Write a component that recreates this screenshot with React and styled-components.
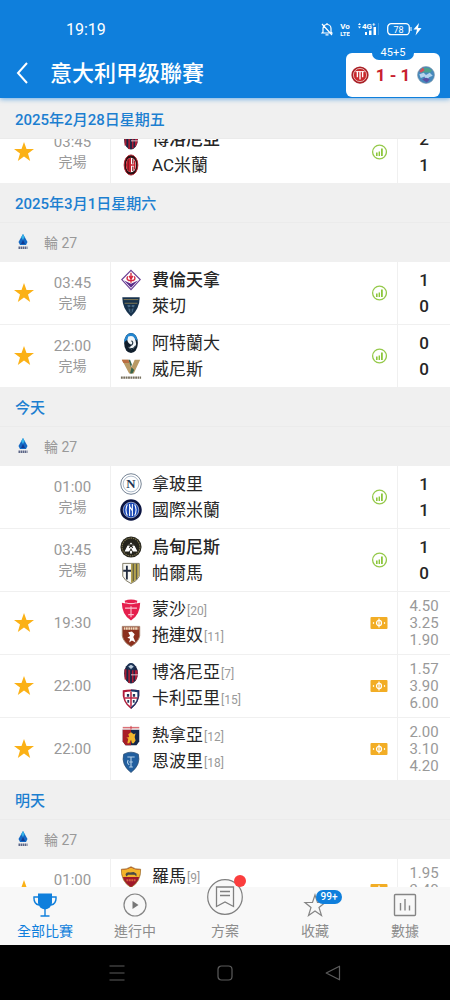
import React from 'react';
import styled, { createGlobalStyle } from 'styled-components';

const BLUE = '#0f7fdc';
const INK = '#262626';
const MUTED = '#999';

const GlobalStyle = createGlobalStyle`
  *, *::before, *::after { box-sizing: border-box; }
  body {
    margin: 0;
    background: #000;
    font-family: Roboto, "Noto Sans CJK TC", sans-serif;
    color: ${INK};
  }
  button {
    margin: 0;
    padding: 0;
    border: 0;
    background: none;
    font: inherit;
    color: inherit;
    cursor: pointer;
  }
  ul { list-style: none; margin: 0; padding: 0; }
  h1, h2 { margin: 0; }
  svg { display: block; flex: none; }
`;

const Screen = styled.div`
  display: flex;
  flex-direction: column;
  height: 100vh;
  background: #fff;
`;

const Header = styled.header`
  position: relative;
  z-index: 2;
  flex: none;
  background: ${BLUE};
  color: #fff;
  box-shadow: 0 1px 5px rgba(15, 127, 220, 0.6);
`;

const StatusBar = styled.div`
  display: flex;
  align-items: center;
  justify-content: space-between;
  height: 48px;
  padding: 10px 28px 0 66px;
  font-size: 16px;
`;

const StatusIcons = styled.div`
  display: flex;
  align-items: center;
  gap: 7px;
`;

const TitleBar = styled.div`
  display: flex;
  align-items: center;
  height: 50px;
  padding: 0 10px 0 12px;
`;

const BackButton = styled.button`
  width: 20px;
  height: 32px;
  display: flex;
  align-items: center;
  justify-content: center;
`;

const Title = styled.h1`
  flex: 1;
  padding: 2px 0 0 18px;
  font-size: 22px;
  line-height: 32px;
  font-weight: 500;
  white-space: nowrap;
`;

const LiveCard = styled.button`
  position: relative;
  display: flex;
  align-items: center;
  justify-content: space-between;
  width: 94px;
  height: 44px;
  margin-top: 4px;
  padding: 0 5px;
  border-radius: 6px;
  background: #fff;
`;

const LiveMinute = styled.span`
  position: absolute;
  top: -7px;
  left: 50%;
  transform: translateX(-50%);
  width: 42px;
  height: 14px;
  border-radius: 7px;
  background: ${BLUE};
  color: #fff;
  font-size: 11px;
  line-height: 14px;
  text-align: center;
`;

const LiveScore = styled.strong`
  color: #c8202f;
  font-size: 17px;
  font-weight: 700;
`;

const MatchList = styled.main`
  flex: 1;
  min-height: 0;
  overflow: hidden;
`;

const DayHeading = styled.h2`
  height: ${(p) => (p.$pinned ? 41 : 40)}px;
  padding: 2px 15px 0;
  border-bottom: 1px solid #ebebeb;
  background: #f0f0f0;
  color: #1c7fd0;
  font-size: 15px;
  line-height: ${(p) => (p.$pinned ? 40 : 38)}px;
  font-weight: 500;
`;

const RoundHeading = styled.div`
  display: flex;
  align-items: center;
  gap: 13px;
  height: 38px;
  padding: 0 15px;
  background: #f0f0f0;
  color: ${MUTED};
  font-size: 14px;
`;

const ScrolledRows = styled.ul`
  display: flex;
  flex-direction: column;
  justify-content: flex-end;
  height: 44px;
  overflow: hidden;
`;

const Row = styled.li`
  display: grid;
  grid-template-columns: 48px 49px 13px 1fr 36px 53px;
  flex: none;
  height: 63px;
  border-top: 1px solid #f0f0f0;
  background: #fff;
`;

const StarCell = styled.div`
  display: flex;
  align-items: center;
  justify-content: center;
`;

const TimeCell = styled.div`
  grid-column: 2;
  display: flex;
  flex-direction: column;
  align-items: center;
  justify-content: center;
  color: ${MUTED};
  font-size: 15px;
  line-height: 20px;
`;

const MatchState = styled.span`
  min-height: 20px;
  font-size: 14px;
`;

const TeamsCell = styled.div`
  grid-column: 4;
  display: flex;
  flex-direction: column;
  justify-content: center;
  padding-left: 9px;
  border-left: 1px solid #f0f0f0;
`;

const Team = styled.div`
  display: flex;
  align-items: center;
  gap: 10px;
  height: 26px;
  font-size: 17px;
  line-height: 26px;
  font-weight: ${(p) => (p.$winner ? 500 : 400)};
  white-space: nowrap;
`;

const Rank = styled.span`
  padding-left: 1px;
  color: ${MUTED};
  font-size: 12px;
`;

const MarkCell = styled.div`
  display: flex;
  align-items: center;
  justify-content: center;
`;

const ScoreCell = styled.div`
  display: flex;
  flex-direction: column;
  align-items: center;
  justify-content: center;
  border-left: 1px solid #f0f0f0;
  font-size: 17px;
  line-height: 26px;
  font-weight: 500;
`;

const OddsCell = styled(ScoreCell)`
  color: ${MUTED};
  font-size: 15px;
  line-height: 17px;
  font-weight: 400;
`;

const TabBar = styled.nav`
  position: relative;
  z-index: 2;
  flex: none;
  display: flex;
  height: 58px;
  background: #f8f8f8;
`;

const Tab = styled.button`
  flex: 1;
  display: flex;
  flex-direction: column;
  align-items: center;
  justify-content: flex-end;
  gap: ${(p) => (p.$raised ? 5 : 3)}px;
  padding-bottom: 3px;
  color: ${(p) => (p.$active ? BLUE : '#8c8c8c')};
  font-size: 14px;
  line-height: 22px;
`;

const TabIcon = styled.span`
  position: relative;
  display: block;
`;

const CountBadge = styled.span`
  position: absolute;
  top: -3px;
  left: 13px;
  width: 26px;
  height: 14px;
  border-radius: 7px;
  background: ${BLUE};
  color: #fff;
  font-size: 10px;
  line-height: 14px;
  font-weight: 500;
  text-align: center;
`;

const DotBadge = styled.span`
  position: absolute;
  top: -4px;
  right: -3px;
  width: 12px;
  height: 12px;
  border-radius: 50%;
  background: #fb3d3d;
`;

const SystemNav = styled.div`
  flex: none;
  display: flex;
  justify-content: center;
  height: 55px;
  background: #000;
  color: #5c5c5c;
`;

const SystemButton = styled.button`
  width: 24%;
  display: flex;
  align-items: center;
  justify-content: center;
`;

const SHIELD = 'M3 2.5 Q12 0.5 21 2.5 Q22.5 15 12 23 Q1.500 15 3 2.500Z';

const crests = {
  bologna: (
    <g>
      <ellipse cx="12" cy="12.500" rx="7.500" ry="11" fill="#1b2746" />
      <path d="M6 8v11M10 8v15" stroke="#a51d33" strokeWidth="2" />
      <path d="M13 9h6q1 6-1.500 10.500L13 23z" fill="#b01c38" />
      <path d="M15.500 9v12" stroke="#1b2746" strokeWidth="1.600" />
      <path d="M12 14h8" stroke="#e6d3d9" strokeWidth="1" />
      <circle cx="12" cy="5" r="4" fill="#1d3557" />
      <path d="M9 5l3-2 3 2-3 2.500z" fill="#b9c9db" />
    </g>
  ),
  milan: (
    <g>
      <ellipse cx="12" cy="12" rx="7.500" ry="11" fill="#2a1013" stroke="#b3202d" strokeWidth="1" />
      <ellipse cx="12" cy="12" rx="5.500" ry="8" fill="#fff" />
      <path d="M12 4a5.500 8 0 0 0 0 16z" fill="#c9202f" />
      <path d="M9 6v12M14 5v5.500M14 13.500v5" stroke="#861720" strokeWidth="1.400" />
      <path d="M12 12h5M16 7v10" stroke="#c9202f" strokeWidth="1.500" />
    </g>
  ),
  fiorentina: (
    <g>
      <path d="M12 1.500L22 11.500 12 22.500 2 11.500z" fill="#fff" stroke="#6a3e93" strokeWidth="1.300" />
      <path d="M4.500 12.500L12 16l7.500-3.500L12 20.500z" fill="#5b2d8a" />
      <path d="M12 4v11M8.500 8q-2 3 1 4.500M15.500 8q2 3-1 4.500M9 12.500h6M10 7.500L12 11l2-3.500" fill="none" stroke="#d62941" strokeWidth="1.500" />
    </g>
  ),
  lecce: (
    <g>
      <path d="M2.500 2.500H21.500Q21.500 15 12 23.500 2.500 15 2.500 2.500z" fill="#17324d" />
      <path d="M4 5h16M5 9h14" stroke="#8a7f56" strokeWidth="1" />
      <path d="M8 11h8l-2 7-2 2-2-2z" fill="#456783" />
      <path d="M12 11v8M9 14h6" stroke="#10253b" strokeWidth="1.200" />
    </g>
  ),
  atalanta: (
    <g>
      <ellipse cx="12" cy="12" rx="7.500" ry="11" fill="#101e2c" />
      <path d="M12 1a7.500 11 0 0 0-7.500 11q2-4 6-3.500 5-1.500 8.800 1A7.500 11 0 0 0 12 1z" fill="#2385cf" />
      <path d="M9 5q5-2 7 2 3 6 0 10-4 4-7-1 3 1 4-2-4-1-5-5z" fill="#f3f6f8" />
      <path d="M12.500 9.500q3 2 0 5M10 17q4 3 7-2" fill="none" stroke="#1d3140" strokeWidth="1.200" />
    </g>
  ),
  venezia: (
    <g>
      <path d="M2 2h7l3.500 8L16 2h6l-7 15h-5z" fill="#b99a65" />
      <path d="M9 2h2l2 5-1 3zM12.500 10l3 3-2 4h-2.500z" fill="#37644c" />
      <path d="M2 2h7l1.500 3.500H3.700z" fill="#ba6e42" />
      <path d="M1 21.500h22" stroke="#77705f" strokeWidth="2.500" strokeDasharray="2 .6" />
    </g>
  ),
  napoli: (
    <g>
      <circle cx="12" cy="12" r="11.200" fill="#fff" stroke="#5a6b80" strokeWidth=".9" />
      <circle cx="12" cy="12" r="8.600" fill="#fff" stroke="#8fa2b6" strokeWidth=".8" />
      <text x="12" y="16.700" textAnchor="middle" fontFamily="Liberation Serif, serif" fontWeight="700" fontSize="14" fill="#1d3556">N</text>
    </g>
  ),
  inter: (
    <g>
      <circle cx="12" cy="12" r="11.700" fill="#0b1442" />
      <circle cx="12" cy="12" r="8.500" fill="#1745b4" stroke="#fff" strokeWidth=".6" />
      <path d="M8 6q-3 6 0 12M16 6q3 6 0 12M10.500 5.500v13M13.500 5.500v13M10.500 8l3 5" fill="none" stroke="#fff" strokeWidth="1.200" />
    </g>
  ),
  udinese: (
    <g>
      <circle cx="12" cy="12" r="11.500" fill="#25241c" />
      <circle cx="12" cy="12" r="9.700" fill="none" stroke="#7c744d" strokeWidth="1.200" strokeDasharray="1.500 1" />
      <path d="M5 17l3-6 4-4 4 4 3 6h-5l-2-4-2 4z" fill="#fff" />
      <path d="M9 10h6M10 8l4 5M14 8l-4 5" stroke="#25241c" strokeWidth="1.100" />
      <path d="M11 16h2v3h-2z" fill="#fff" />
    </g>
  ),
  parma: (
    <g>
      <path d="M3 1.500h18v14q-2 5-9 8-7-3-9-8z" fill="#f7f7f4" stroke="#77725c" strokeWidth="1" />
      <path d="M12 2h8.500v13q-2 5-8.500 8z" fill="#b3a14b" />
      <path d="M14.500 2v19M18 2v17" stroke="#5b5b49" strokeWidth="1.300" />
      <path d="M7.500 4v15M3.500 9.500H12" stroke="#202a3e" strokeWidth="2" />
    </g>
  ),
  monza: (
    <g>
      <path d="M5 2q7-3 14 0l-1 3 4-1q0 13-10 19.500Q2 17 2 4l4 1z" fill="#e51f4d" />
      <path d="M6 4q6 2 12 0M5.500 10h13M12 8v12M9 17h6" fill="none" stroke="#fbc3cf" strokeWidth="1.200" />
    </g>
  ),
  torino: (
    <g>
      <path d="M2.500 1.500h19V12Q20 19 12 23.500 4 19 2.500 12z" fill="#8b2f1d" stroke="#a5826c" strokeWidth="1" />
      <path d="M4 3.800h16" stroke="#f0ddbf" strokeWidth="2.600" strokeDasharray="2 .5" />
      <path d="M9 8l4-1 3 3-1.500 3 2.500 6-4-2-3 2 1-4-3-1 3-2z" fill="#fff" />
    </g>
  ),
  cagliari: (
    <g>
      <path d={SHIELD} fill="#ae1938" />
      <path d="M12 1.500q5 0 9 1 1.500 12.500-9 20.500z" fill="#1b3468" />
      <path d="M5 4.500q7-1.500 14 0 1 10.500-7 16-8-5.500-7-16z" fill="#fff" />
      <path d="M12 4v16M5 11h14" stroke="#bd2948" strokeWidth="1.700" />
      <path d="M7.500 6.500H10v3H7.500zM14 6.500h2.500v3H14zM8 13h2v3H8zM14 13h2v3h-2z" fill="#26365b" />
    </g>
  ),
  genoa: (
    <g>
      <path d="M3 5h18v13l-3 4H6l-3-4z" fill="#14284a" />
      <path d="M3 5h9v17H6l-3-4z" fill="#a81e27" />
      <path d="M3 1h18v4H3z" fill="#f6eeee" />
      <path d="M12 1v4M3 3h18" stroke="#cf3540" strokeWidth="1" />
      <path d="M9 10l3-2 3 2 2-1-1 4 1 4-2 3h-2l-1-4-2 4H8l1-5-2-1 3-1z" fill="#f0b62c" />
    </g>
  ),
  empoli: (
    <g>
      <path d="M4 3.500Q12-1 20 3.500 23 15 12 23.500 1 15 4 3.500z" fill="#225f9f" stroke="#2a4b70" strokeWidth=".8" />
      <path d="M8 6.500h8M12 6.500v11M9 10q-2 3 1 5M10 17.500h4M10 12h4" fill="none" stroke="#b4d0e8" strokeWidth="1.200" />
    </g>
  ),
  roma: (
    <g>
      <path d="M1.500 3.500Q7 4 12 .8 17 4 22.500 3.500 23 17 12 23.500 1 17 1.500 3.500z" fill="#a0192a" stroke="#a0802f" strokeWidth=".8" />
      <path d="M2 4Q7 4.500 12 1.500 17 4.500 22 4q.4 4-1 8H3Q1.500 8 2 4z" fill="#f3b42a" />
      <path d="M6 9q1-3 5-2l4-.500 3 2v3l-2-2H9l-2 2z" fill="#4a4a46" />
      <path d="M7 15.500h10" stroke="#d9603c" strokeWidth="2" strokeDasharray="2 .7" />
    </g>
  ),
  liveHome: (
    <g>
      <circle cx="12" cy="12" r="11.500" fill="#a92027" />
      <circle cx="12" cy="12" r="8.800" fill="#c9282c" stroke="#f1dcd6" strokeWidth="1" />
      <path d="M8.500 7v8M12 7v11M15.500 7v8" stroke="#fff" strokeWidth="1.800" />
      <path d="M6 7.500h12" stroke="#fff" strokeWidth="1.200" />
    </g>
  ),
  liveAway: (
    <g>
      <circle cx="12" cy="12" r="11.300" fill="#4689bd" stroke="#8197a8" strokeWidth=".8" />
      <path d="M4 5.500Q12-1 20 5.500l-2 3H6z" fill="#4ea08c" />
      <path d="M3 6.500l5-4.500 2 4-5 3z" fill="#d24e5c" />
      <path d="M3 11l6-2 3 3 5-3 4 4-5 2-3 5-3-6-5 2z" fill="#b4d3ed" />
      <path d="M7 18q5-5 10 0l-4 4z" fill="#5a4fa3" />
    </g>
  ),
};

const Crest = ({ name, size = 22 }) => (
  <svg width={size} height={size} viewBox="0 0 24 24" aria-hidden="true">
    {crests[name]}
  </svg>
);

const StarIcon = () => (
  <svg width="22" height="22" viewBox="0 0 22 22" aria-hidden="true">
    <path d="M11 1l2.500 7H21l-6 4.600 2.200 7.400L11 15.600 4.800 20 7 12.600 1 8h7.500z" fill="#fbb116" />
  </svg>
);

const StatsIcon = () => (
  <svg width="16" height="16" viewBox="0 0 16 16" aria-label="數據">
    <circle cx="8.500" cy="8" r="6.900" fill="none" stroke="#95c94a" strokeWidth="1.300" />
    <path d="M5 8.500h1.600V12H5zM7.600 7.500h1.400V12H7.600zM10 4.500h1.800V12H10z" fill="#8cc63c" />
  </svg>
);

const TicketIcon = () => (
  <svg width="18" height="12" viewBox="0 0 18 12" aria-label="賠率">
    <rect x=".5" width="17" height="12" rx="1" fill="#f2ad25" />
    <ellipse cx="9" cy="6" rx="2.500" ry="2.700" fill="none" stroke="#fff" strokeWidth="1.200" />
    <path d="M9 1.500v9" stroke="#fff" strokeWidth="1.200" />
    <path d="M3.500 5v2M14.500 5v2" stroke="#fff4d2" strokeWidth="1.200" />
  </svg>
);

const LeagueIcon = () => (
  <svg width="16" height="16" viewBox="0 0 16 16" aria-hidden="true">
    <path d="M8 0l2 3.500L12.500 8 11 11H5L3.500 8 6 3.500z" fill="#1469c4" />
    <path d="M8 0l1.600 3L8 6 6.200 3.200z" fill="#35b3e8" />
    <path d="M8 6l2 4H6z" fill="#123a91" />
    <path d="M3.500 13.800h9" stroke="#5c6687" strokeWidth="2.400" strokeDasharray="1.600 .5" />
  </svg>
);

const days = [
  {
    label: '2025年3月1日星期六',
    matches: [
      { star: true, time: '03:45', state: '完場', score: [1, 0], teams: [['fiorentina', '費倫天拿', null, true], ['lecce', '萊切']] },
      { star: true, time: '22:00', state: '完場', score: [0, 0], teams: [['atalanta', '阿特蘭大'], ['venezia', '威尼斯']] },
    ],
  },
  {
    label: '今天',
    matches: [
      { time: '01:00', state: '完場', score: [1, 1], teams: [['napoli', '拿玻里'], ['inter', '國際米蘭']] },
      { time: '03:45', state: '完場', score: [1, 0], teams: [['udinese', '烏甸尼斯', null, true], ['parma', '帕爾馬']] },
      { star: true, time: '19:30', odds: ['4.50', '3.25', '1.90'], teams: [['monza', '蒙沙', 20], ['torino', '拖連奴', 11]] },
      { star: true, time: '22:00', odds: ['1.57', '3.90', '6.00'], teams: [['bologna', '博洛尼亞', 7], ['cagliari', '卡利亞里', 15]] },
      { star: true, time: '22:00', odds: ['2.00', '3.10', '4.20'], teams: [['genoa', '熱拿亞', 12], ['empoli', '恩波里', 18]] },
    ],
  },
  {
    label: '明天',
    matches: [
      { star: true, time: '01:00', state: '', odds: ['1.95', '3.40', ''], teams: [['roma', '羅馬', 9]] },
    ],
  },
];

const scrolledMatch = {
  star: true,
  time: '03:45',
  state: '完場',
  score: [2, 1],
  teams: [['bologna', '博洛尼亞', null, true], ['milan', 'AC米蘭']],
};

const OddsValue = styled.span`
  min-height: 17px;
`;

const Match = ({ match }) => (
  <Row>
    <StarCell>
      {match.star && (
        <button type="button" aria-label="收藏">
          <StarIcon />
        </button>
      )}
    </StarCell>
    <TimeCell>
      <span>{match.time}</span>
      {match.state !== undefined && <MatchState>{match.state}</MatchState>}
    </TimeCell>
    <TeamsCell>
      {match.teams.map(([crest, name, rank, winner]) => (
        <Team key={name} $winner={winner}>
          <Crest name={crest} />
          <span>
            {name}
            {rank && <Rank>[{rank}]</Rank>}
          </span>
        </Team>
      ))}
      {match.teams.length === 1 && <Team />}
    </TeamsCell>
    <MarkCell>{match.odds ? <TicketIcon /> : <StatsIcon />}</MarkCell>
    {match.odds ? (
      <OddsCell>
        {match.odds.map((o) => <OddsValue key={o}>{o}</OddsValue>)}
      </OddsCell>
    ) : (
      <ScoreCell>
        {match.score.map((s, i) => <span key={i}>{s}</span>)}
      </ScoreCell>
    )}
  </Row>
);

const StatusGlyphs = () => (
  <StatusIcons>
    <svg width="12" height="14" viewBox="0 0 12 14" fill="none" stroke="#fff" strokeWidth="1.200" aria-hidden="true">
      <path d="M2 10V6.500a4 4 0 0 1 8 0V10l1 1H1zM4.500 12.800h3M6 1v1.500M1 2l10 11" />
    </svg>
    <svg width="10" height="14" viewBox="0 0 10 14" aria-hidden="true">
      <g fill="#fff" fontFamily="Roboto, sans-serif" fontWeight="700" textAnchor="middle">
        <text x="5" y="6.500" fontSize="8">Vo</text>
        <text x="5" y="13.500" fontSize="6">LTE</text>
      </g>
    </svg>
    <svg width="22" height="14" viewBox="0 0 22 14" fill="#fff" aria-hidden="true">
      <path d="M1 3l1.500-2L4 3zM1 4.500h3L2.500 6.500zM8 10h2v3H8zM12 8.500h2.500V13H12zM16.500 5H19v8h-2.500z" />
      <text x="5" y="6.500" fontFamily="Roboto, sans-serif" fontWeight="700" fontSize="8">4G⁺</text>
      <path d="M21 1h.5v12H21z" opacity=".4" />
    </svg>
    <svg width="36" height="14" viewBox="0 0 36 14" aria-hidden="true">
      <rect x="1.700" y="1.700" width="21.600" height="11" rx="3.500" fill="none" stroke="#fff" strokeWidth="1.300" />
      <path d="M24.500 5h1v4h-1z" fill="#fff" />
      <text x="12.500" y="10.500" textAnchor="middle" fontFamily="Roboto, sans-serif" fontSize="9" fill="#fff">78</text>
      <path d="M33 1l-5.500 6.500h3.500L29.500 13.500 35.500 6h-3.500z" fill="#fff" />
    </svg>
  </StatusIcons>
);

const TrophyIcon = () => (
  <svg width="24" height="24" viewBox="0 0 24 24" aria-hidden="true">
    <path d="M5 .5h14V10q-1 5.500-7 6.500Q6 15.500 5 10z" fill={BLUE} />
    <path d="M5 4H1q-.500 7 5 8M19 4h4q.500 7-5 8M12 16v7M7.500 23h9" fill="none" stroke={BLUE} strokeWidth="1.400" />
  </svg>
);

const PlayIcon = () => (
  <svg width="24" height="24" viewBox="0 0 24 24" aria-hidden="true">
    <circle cx="12" cy="12" r="11" fill="none" stroke="#858585" strokeWidth="1.200" />
    <path d="M9.500 8l6 4-6 4z" fill="#777" />
  </svg>
);

const PlanIcon = () => (
  <svg width="36" height="36" viewBox="0 0 36 36" aria-hidden="true">
    <circle cx="18" cy="18" r="17.300" fill="#f8f8f8" stroke="#808080" strokeWidth="1.200" />
    <path d="M9.500 8h17v19.500L18 23l-8.500 4.500zM13 12.500h10M13 16.500h10" fill="none" stroke="#808080" strokeWidth="1.300" />
  </svg>
);

const FavouriteIcon = () => (
  <svg width="24" height="24" viewBox="0 0 24 24" aria-hidden="true">
    <path d="M12 2l2.500 7.500H22L16 14.500l2.500 8L12 18l-6.500 4.500 2.500-8L2 9.500h7.500z" fill="none" stroke="#858585" strokeWidth="1.200" />
  </svg>
);

const DataIcon = () => (
  <svg width="24" height="24" viewBox="0 0 24 24" fill="none" stroke="#858585" aria-hidden="true">
    <rect x="1.500" y="1.500" width="21" height="21" rx="1" strokeWidth="1.400" />
    <path d="M7.500 10v7.500M12 6v11.500M16.500 12.500v5" strokeWidth="1.400" />
  </svg>
);

export default function App() {
  return (
    <>
      <GlobalStyle />
      <Screen>
        <Header>
          <StatusBar>
            <span>19:19</span>
            <StatusGlyphs />
          </StatusBar>
          <TitleBar>
            <BackButton type="button" aria-label="返回">
              <svg width="12" height="22" viewBox="0 0 12 22" fill="none" stroke="#fff" strokeWidth="2" aria-hidden="true">
                <path d="M11 1L2 11l9 10" />
              </svg>
            </BackButton>
            <Title>意大利甲级聯賽</Title>
            <LiveCard type="button">
              <LiveMinute>45+5</LiveMinute>
              <Crest name="liveHome" size={18} />
              <LiveScore>1 - 1</LiveScore>
              <Crest name="liveAway" size={18} />
            </LiveCard>
          </TitleBar>
        </Header>

        <MatchList>
          <DayHeading $pinned>2025年2月28日星期五</DayHeading>
          <ScrolledRows>
            <Match match={scrolledMatch} />
          </ScrolledRows>
          {days.map((day) => (
            <section key={day.label}>
              <DayHeading>{day.label}</DayHeading>
              <RoundHeading>
                <LeagueIcon />
                輪 27
              </RoundHeading>
              <ul>
                {day.matches.map((m) => (
                  <Match key={m.teams[0][1]} match={m} />
                ))}
              </ul>
            </section>
          ))}
        </MatchList>

        <TabBar>
          <Tab type="button" $active>
            <TabIcon><TrophyIcon /></TabIcon>
            全部比賽
          </Tab>
          <Tab type="button">
            <TabIcon><PlayIcon /></TabIcon>
            進行中
          </Tab>
          <Tab type="button" $raised>
            <TabIcon>
              <PlanIcon />
              <DotBadge />
            </TabIcon>
            方案
          </Tab>
          <Tab type="button">
            <TabIcon>
              <FavouriteIcon />
              <CountBadge>99+</CountBadge>
            </TabIcon>
            收藏
          </Tab>
          <Tab type="button">
            <TabIcon><DataIcon /></TabIcon>
            數據
          </Tab>
        </TabBar>

        <SystemNav>
          <SystemButton type="button" aria-label="最近">
            <svg width="16" height="16" viewBox="0 0 16 16" fill="none" stroke="currentColor" strokeWidth="1.200" aria-hidden="true">
              <path d="M.5 1h15M.5 8h15M.5 15h15" />
            </svg>
          </SystemButton>
          <SystemButton type="button" aria-label="主頁">
            <svg width="16" height="16" viewBox="0 0 16 16" fill="none" stroke="currentColor" strokeWidth="1.200" aria-hidden="true">
              <rect x="1" y="1" width="14" height="14" rx="3.500" />
            </svg>
          </SystemButton>
          <SystemButton type="button" aria-label="返回">
            <svg width="16" height="16" viewBox="0 0 16 16" fill="none" stroke="currentColor" strokeWidth="1.200" strokeLinejoin="round" aria-hidden="true">
              <path d="M14.500 1.200v13.600L1.200 8z" />
            </svg>
          </SystemButton>
        </SystemNav>
      </Screen>
    </>
  );
}
